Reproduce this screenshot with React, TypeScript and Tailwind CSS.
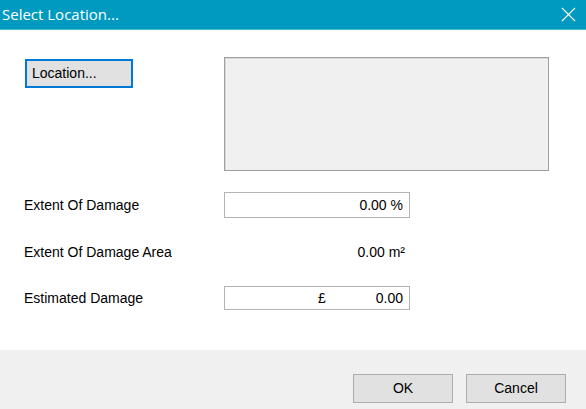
import { X } from "lucide-react";

const font = { fontFamily: '"Liberation Sans", Arial, sans-serif' };

function FieldRow({ label, children }: { label: string; children: React.ReactNode }) {
  return (
    <div className="flex items-center">
      <div className="w-[224px] pl-[24px] text-[14px] text-black">{label}</div>
      {children}
    </div>
  );
}

function DialogButton({ label }: { label: string }) {
  return (
    <button className="w-[100px] h-[29px] border border-[#adadad] bg-[#e1e1e1] text-[14px] text-black">
      {label}
    </button>
  );
}

export default function App() {
  return (
    <div className="w-[586px] h-[409px] flex flex-col bg-white overflow-hidden" style={font}>
      {/* title bar */}
      <div className="h-[30px] shrink-0 flex items-center justify-between bg-[#0099c0] border-b border-[#4db8d4]">
        <span
          className="pl-[2px] text-[15px] text-white"
          style={{ fontFamily: '"Open Sans", "Noto Sans", sans-serif' }}
        >
          Select Location...
        </span>
        <X className="mr-[5px] w-[25px] h-[25px] text-white" strokeWidth={1.1} />
      </div>

      {/* body */}
      <div className="flex-1 flex flex-col pt-[27px]">
        <div className="flex">
          <div className="w-[224px] pl-[25px] pt-[2px]">
            <button className="w-[108px] h-[29px] border-2 border-[#0078d7] bg-[#e1e1e1] text-left pl-[5px] text-[14px] text-black">
              Location...
            </button>
          </div>
          <div className="w-[325px] h-[114px] border border-[#a0a0a0] bg-[#f0f0f0] shadow-[inset_1px_1px_0_#d8d8d8]" />
        </div>

        <div className="mt-[21px]">
          <FieldRow label="Extent Of Damage">
            <div className="w-[186px] h-[26px] border border-[#b4b4b4] flex items-center justify-end pr-[6px] text-[14px] text-black">
              0.00 %
            </div>
          </FieldRow>
        </div>

        <div className="mt-[24px] h-[20px]">
          <FieldRow label="Extent Of Damage Area">
            <div className="w-[186px] flex justify-end pr-[5px] text-[14px] text-black">
              0.00 m²
            </div>
          </FieldRow>
        </div>

        <div className="mt-[24px]">
          <FieldRow label="Estimated Damage">
            <div className="w-[186px] h-[24px] border border-[#b4b4b4] flex items-center text-[14px] text-black">
              <span className="ml-[93px]">£</span>
              <span className="ml-auto pr-[6px]">0.00</span>
            </div>
          </FieldRow>
        </div>
      </div>

      {/* button strip */}
      <div className="h-[59px] shrink-0 bg-[#f0f0f0] flex justify-end items-start pt-[24px] pr-[20px] gap-[13px]">
        <DialogButton label="OK" />
        <DialogButton label="Cancel" />
      </div>
    </div>
  );
}
